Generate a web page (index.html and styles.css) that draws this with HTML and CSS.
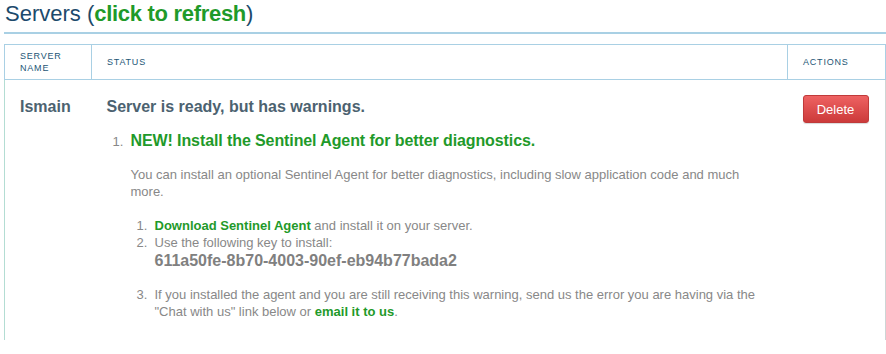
FILE: index.html
```html
<!DOCTYPE html>
<html>
<head>
<meta charset="utf-8">
<link rel="stylesheet" href="styles.css">
</head>
<body>
<div class="page">
  <h1 class="title">Servers (<a class="refresh" href="#">click to refresh</a>)</h1>
  <div class="rule"></div>
  <table class="servers">
    <thead>
      <tr>
        <th class="col-name">Server<br>Name</th>
        <th class="col-status">Status</th>
        <th class="col-actions">Actions</th>
      </tr>
    </thead>
    <tbody>
      <tr class="row">
        <td class="cell-name">Ismain</td>
        <td class="cell-status">
          <div class="status-title">Server is ready, but has warnings.</div>
          <ol class="warnings">
            <li>
              <div class="warn-title">NEW! Install the Sentinel Agent for better diagnostics.</div>
              <p class="warn-text">You can install an optional Sentinel Agent for better diagnostics, including slow application code and much more.</p>
              <ol class="steps">
                <li><a class="link" href="#">Download Sentinel Agent</a> and install it on your server.</li>
                <li>Use the following key to install:
                  <div class="key">611a50fe-8b70-4003-90ef-eb94b77bada2</div>
                </li>
                <li class="step-last">If you installed the agent and you are still receiving this warning, send us the error you are having via the "Chat with us" link below or <a class="link" href="#">email it to us</a>.</li>
              </ol>
            </li>
          </ol>
        </td>
        <td class="cell-actions"><button class="btn-delete">Delete</button></td>
      </tr>
    </tbody>
  </table>
</div>
</body>
</html>
```

FILE: styles.css
```css
html, body {
  margin: 0;
  padding: 0;
  background: #ffffff;
}

body {
  font-family: "Liberation Sans", Arial, sans-serif;
}

.page {
  padding: 1px 0 0 4px;
}

.title {
  margin: 0 0 0 1px;
  font-size: 22px;
  line-height: 26px;
  font-weight: normal;
  color: #1c4a6c;
}

.refresh {
  color: #1f9a2a;
  font-weight: bold;
  text-decoration: none;
  letter-spacing: -0.3px;
}

.rule {
  height: 2px;
  background: #a9d0e4;
  margin-top: 5px;
}

.servers {
  margin-top: 10px;
  width: 880px;
  border-collapse: collapse;
  table-layout: fixed;
}

.servers th {
  border: 1px solid #a9d0e4;
  height: 34px;
  padding: 0 0 0 15px;
  text-align: left;
  vertical-align: middle;
  font-size: 9px;
  line-height: 12px;
  letter-spacing: 0.8px;
  font-weight: normal;
  text-transform: uppercase;
  color: #1d5676;
}

.col-name { width: 71px; }
.col-status { width: 680px; }
.col-actions { width: 82px; }

.row td {
  vertical-align: top;
  padding: 0 0 0 15px;
}

.row .cell-name {
  border-left: 1px solid #b3ddd3;
  padding-top: 17px;
  font-size: 16px;
  line-height: 20px;
  font-weight: bold;
  color: #4c6270;
}

.row .cell-status {
  padding-top: 17px;
  padding-bottom: 20px;
}

.row .cell-actions {
  border-right: 1px solid #cdd5d5;
  padding-top: 15px;
}

.status-title {
  font-size: 16px;
  line-height: 20px;
  font-weight: bold;
  color: #4c6270;
}

.warnings {
  margin: 14px 0 0 0;
  padding-left: 24px;
  font-size: 13px;
  color: #888888;
}

.warnings > li::marker {
  content: counter(list-item) ".  ";
}

.warn-title {
  font-size: 16px;
  line-height: 20px;
  font-weight: bold;
  color: #1f9a2a;
  letter-spacing: -0.1px;
}

.warn-text {
  margin: 15px 0 0 0;
  width: 620px;
  line-height: 17px;
  color: #888888;
}

.steps {
  margin: 17px 0 0 0;
  padding-left: 24px;
  line-height: 17px;
  color: #888888;
}

.steps > li::marker {
  content: counter(list-item) ".  ";
}

.key {
  font-size: 16px;
  line-height: 20px;
  font-weight: bold;
  color: #808080;
}

.step-last {
  margin-top: 15px;
  width: 610px;
}

.link {
  color: #1f9a2a;
  font-weight: bold;
  text-decoration: none;
}

.btn-delete {
  width: 66px;
  height: 28px;
  margin: 0;
  padding: 0;
  border: 1px solid #c03a3a;
  border-radius: 3px;
  background: linear-gradient(#ee6262, #cc3a3a);
  color: #ffffff;
  font-family: "Liberation Sans", Arial, sans-serif;
  font-size: 13px;
  box-shadow: 0 1px 1px rgba(0,0,0,0.15);
}
```
